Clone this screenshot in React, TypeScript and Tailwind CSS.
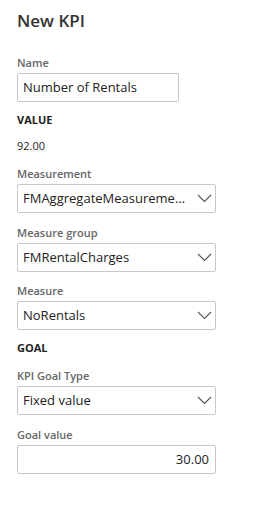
import React from 'react';

const Chevron = () => (
  <svg width="15" height="9" viewBox="0 0 15 9" fill="none" className="shrink-0">
    <path d="M1 1l6.5 6.5L14 1" stroke="#555" strokeWidth="1.1" />
  </svg>
);

const Label = ({ children }: { children: React.ReactNode }) => (
  <div className="text-[11px] leading-[14px] font-semibold text-[#666]">{children}</div>
);

const Select = ({ value }: { value: string }) => (
  <div className="mt-[3px] flex h-[29px] w-[199px] items-center justify-between gap-[8px] rounded-[2px] border border-[#c8c8c8] bg-white pl-[5px] pr-[3px]">
    <span className="min-w-0 truncate text-[13px] text-[#222]">{value}</span>
    <Chevron />
  </div>
);

export default function App() {
  return (
    <div
      className="min-h-[518px] w-[254px] bg-white px-[17px] pt-[9px] text-[#222]"
      style={{ fontFamily: '"Open Sans", "Noto Sans", sans-serif' }}
    >
      <h1 className="text-[17px] leading-[24px] font-semibold text-[#333]">New KPI</h1>

      <div className="mt-[23px]">
        <Label>Name</Label>
        <div className="mt-[3px] flex h-[29px] w-[162px] items-center rounded-[2px] border border-[#c8c8c8] px-[5px] text-[13px]">
          Number of Rentals
        </div>
      </div>

      <div className="mt-[11px] text-[11px] leading-[14px] font-bold text-[#222]">VALUE</div>
      <div className="mt-[12px] text-[11px] leading-[14px] text-[#222]">92.00</div>

      <div className="mt-[14px]">
        <Label>Measurement</Label>
        <Select value="FMAggregateMeasurements" />
      </div>

      <div className="mt-[13px]">
        <Label>Measure group</Label>
        <Select value="FMRentalCharges" />
      </div>

      <div className="mt-[12px]">
        <Label>Measure</Label>
        <Select value="NoRentals" />
      </div>

      <div className="mt-[11px] text-[11px] leading-[14px] font-bold text-[#222]">GOAL</div>

      <div className="mt-[14px]">
        <Label>KPI Goal Type</Label>
        <Select value="Fixed value" />
      </div>

      <div className="mt-[13px]">
        <Label>Goal value</Label>
        <div className="mt-[3px] flex h-[29px] w-[199px] items-center justify-end rounded-[2px] border border-[#c8c8c8] px-[6px] text-[13px]">
          30.00
        </div>
      </div>
    </div>
  );
}
